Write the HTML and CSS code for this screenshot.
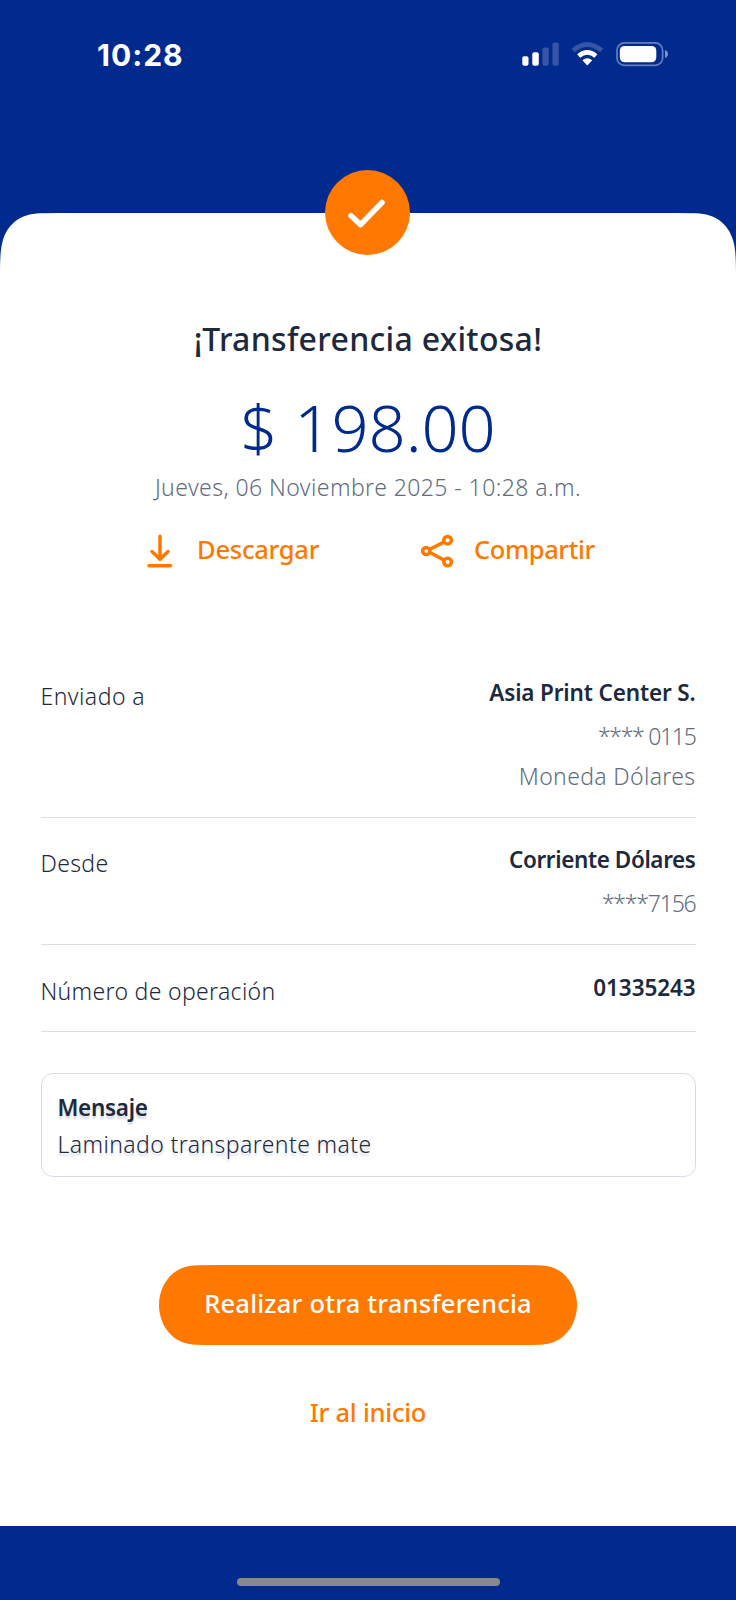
FILE: index.html
```html
<!DOCTYPE html>
<html lang="es">
<head>
<meta charset="utf-8">
<title>Transferencia exitosa</title>
<link rel="stylesheet" href="styles.css">
</head>
<body>
<div class="screen">
  <header class="status">
    <span class="clock">10:28</span>
    <svg class="status-icons" width="150" height="28" viewBox="0 0 150 28" fill="#fff">
      <rect x="2.3" y="14.3" width="6.2" height="9.5" rx="2"/>
      <rect x="12.3" y="10.3" width="6.5" height="13.5" rx="2"/>
      <g fill="#3555a6">
        <rect x="22.4" y="5.4" width="6.4" height="18.4" rx="2"/>
        <rect x="32.4" y="0.4" width="6.4" height="23.4" rx="2"/>
      </g>
      <path d="M53 8.6Q67.300-3.600 81.600 8.600" fill="none" stroke="#3555a6" stroke-width="4.600"/>
      <path d="M58.700 14Q67.300 6.800 75.900 14" fill="none" stroke="#fff" stroke-width="4.600"/>
      <path d="M62.400 18.200Q67.300 14.200 72.200 18.200L67.300 23.600Z"/>
      <rect x="97" y="0.900" width="45.600" height="22.400" rx="7.400" fill="none" stroke="#667fbf" stroke-width="1.700"/>
      <rect x="99.800" y="3.900" width="36.500" height="16.400" rx="4.800"/>
      <path d="M145 8.100Q148 9.200 148 12.100T145 16.100Z" fill="#7f94ca"/>
    </svg>
  </header>
  <main class="sheet">
    <svg class="sheet-edge" width="736" height="62" viewBox="0 0 736 62"><path d="M0 62C0 45 .5 35 3 27C8 11 20 1 40 .3Q48 0 60 0H676Q688 0 696 .3C716 1 728 11 733 27C735.500 35 736 45 736 62Z" fill="#fff"/></svg>
    <div class="badge">
      <svg width="85" height="85" viewBox="0 0 85 85"><path d="M26 45.700L35.600 54.700L57 32.500" fill="none" stroke="#fff" stroke-width="5.500" stroke-linecap="round" stroke-linejoin="round"/></svg>
    </div>
    <h1 class="title">¡Transferencia exitosa!</h1>
    <p class="amount">$ 198.00</p>
    <p class="date">Jueves, 06 Noviembre 2025 - 10:28 a.m.</p>
    <div class="actions">
      <a class="action download">
        <svg width="26" height="34" viewBox="0 0 26 34" fill="none" stroke="#ff7800" stroke-width="3.500" stroke-linecap="round" stroke-linejoin="round"><path d="M13 2.300V25M5 17.500L13 25.300L21 17.500M2 31.800H23.500"/></svg>
        <span>Descargar</span>
      </a>
      <a class="action share">
        <svg width="34" height="34" viewBox="0 0 34 34" fill="none" stroke="#ff7800" stroke-width="3.500"><path d="M9.500 15.500L23.800 8.100M9.500 18.300L23.800 26"/><circle cx="6.200" cy="17" r="3.600"/><circle cx="27.600" cy="6.200" r="3.800"/><circle cx="27.600" cy="28" r="3.800"/></svg>
        <span>Compartir</span>
      </a>
    </div>
    <section class="details">
      <div class="row to">
        <span class="label l-to">Enviado a</span>
        <div class="values"><b class="name n-to">Asia Print Center S.</b><span class="sub s-acct">**** 0115</span><span class="sub s-cur">Moneda Dólares</span></div>
      </div>
      <div class="row from">
        <span class="label l-from">Desde</span>
        <div class="values"><b class="name n-from">Corriente Dólares</b><span class="sub s-from">****7156</span></div>
      </div>
      <div class="row operation">
        <span class="label l-op">Número de operación</span>
        <div class="values"><b class="name n-op">01335243</b></div>
      </div>
    </section>
    <section class="message">
      <b class="message-title">Mensaje</b>
      <p class="message-text">Laminado transparente mate</p>
    </section>
    <div class="buttons">
      <a class="primary">
        <svg class="pill" width="418" height="80" viewBox="0 0 418 81" preserveAspectRatio="none"><path d="M0 40.500C0 20 14 1.500 34 .500Q38 0 60 0H358Q380 0 384 .500C404 1.500 418 20 418 40.500C418 61 404 79.500 384 80.500Q380 81 358 81H60Q38 81 34 80.500C14 79.500 0 61 0 40.500Z" fill="#ff7800"/></svg>
        <span class="primary-text">Realizar otra transferencia</span>
      </a>
      <a class="secondary">Ir al inicio</a>
    </div>
  </main>
  <footer class="bottom"><div class="home-indicator"></div></footer>
</div>
</body>
</html>
```
FILE: styles.css
```css
* { box-sizing: border-box; }
body, h1, p { margin: 0; }
body { font-family: "Noto Sans", "Open Sans", sans-serif; background: #002a8d; color: #1d293d; }
svg { display: block; flex: none; }
.screen { width: 736px; height: 1600px; overflow: hidden; display: flex; flex-direction: column; white-space: nowrap; background: #002a8d; }
.status { height: 213px; display: flex; justify-content: space-between; align-items: flex-start; padding: 42px 66px 0 97px; color: #fff; }
.clock { font: 700 30px/26px Inter, sans-serif; letter-spacing: 1px; }
.status-icons { margin-left: auto; }
.sheet { position: relative; height: 1313px; display: flex; flex-direction: column; align-items: center; background: linear-gradient(#fff, #fff) 0 61px no-repeat; }
.sheet-edge { margin-bottom: -1px; }
.badge { position: absolute; top: -43px; left: 325px; width: 85px; height: 85px; border-radius: 50%; background: #ff7800; }
.title { margin-top: 41px; height: 48px; font-size: 32px; line-height: 48px; font-weight: 550; letter-spacing: .3px; }
.amount { margin-top: 24px; height: 80px; font-size: 65px; line-height: 80px; font-weight: 350; color: #002a8d; }
.date { margin-top: 3px; height: 34px; font-size: 23px; line-height: 34px; font-weight: 350; letter-spacing: .43px; color: #626d7f; }
.actions { margin-top: 28px; width: 736px; height: 40px; padding-left: 147px; display: flex; align-items: flex-start; color: #ff7800; font-size: 25.500px; font-weight: 500; line-height: 34px; letter-spacing: -.25px; }
.action { display: flex; height: 40px; }
.action svg { margin-top: 1.500px; }
.download { width: 273px; gap: 24px; }
.share { gap: 20px; letter-spacing: -.4px; }
.details { width: 655px; margin-top: 95px; font-size: 22.500px; line-height: 34px; }
.row { display: flex; justify-content: space-between; border-bottom: 1.500px solid #dcdee3; }
.to { height: 151px; }
.from { height: 127px; padding-top: 16px; }
.operation { height: 87px; padding-top: 17px; }
.label { margin-top: 12px; font-size: 23px; font-weight: 350; letter-spacing: .32px; }
.l-to { letter-spacing: .45px; }
.values { margin-top: 9px; display: flex; flex-direction: column; align-items: flex-end; }
.name { font-weight: 600; height: 43px; }
.n-to { letter-spacing: -.15px; }
.n-from { letter-spacing: -.4px; }
.n-op { letter-spacing: -.1px; }
.sub { height: 40px; color: #626d7f; font-size: 23px; font-weight: 350; }
.s-acct { letter-spacing: -1.300px; }
.s-cur { letter-spacing: .35px; }
.s-from { letter-spacing: -1.200px; }
.message { width: 655px; height: 104px; margin-top: 41px; padding: 15px 16px; border: 1.500px solid #d6dbe8; border-radius: 12px; font-size: 22.500px; line-height: 37px; text-shadow: 0 3px 2px #d5d9e6; }
.message-title { display: block; font-weight: 650; letter-spacing: -.3px; }
.message-text { font-size: 23px; font-weight: 350; letter-spacing: .4px; }
.buttons { margin-top: 88px; display: flex; flex-direction: column; align-items: center; font-size: 25.500px; font-weight: 500; }
.primary { display: grid; place-items: center; color: #fff; }
.pill, .primary-text { grid-area: 1 / 1; }
.primary-text { line-height: 40px; margin-top: -4px; letter-spacing: .22px; }
.secondary { margin-top: 47px; line-height: 40px; letter-spacing: -.25px; color: #ff7800; }
.bottom { height: 74px; padding-top: 52px; background: #002a8d; }
.home-indicator { width: 263px; height: 8px; margin: 0 auto; border-radius: 4px; background: #898989; }
```
